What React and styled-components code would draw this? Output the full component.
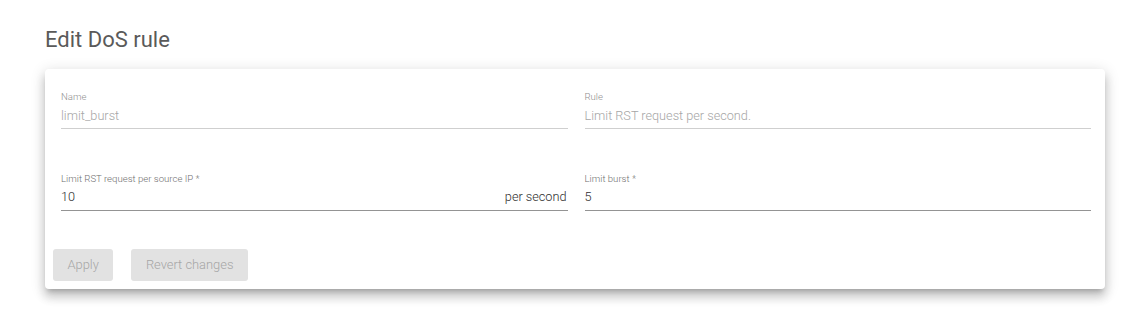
import React from "react";
import styled, { createGlobalStyle } from "styled-components";

const Global = createGlobalStyle`
  html, body { margin: 0; padding: 0; background: #ffffff; }
  body { font-family: Roboto, "Noto Sans", "Liberation Sans", sans-serif; }
  * { box-sizing: border-box; }
`;

const Page = styled.div`
  min-height: 100vh;
  padding: 26.5px 27px 39px 45px;
`;

const Title = styled.h1`
  margin: 0 0 16.5px 0;
  font-size: 22px;
  line-height: 26px;
  font-weight: 400;
  color: #5a5a5a;
`;

const Card = styled.div`
  width: 1060px;
  background: #fff;
  border-radius: 4px;
  box-shadow: 0 5px 5px -3px rgba(0, 0, 0, 0.2), 0 8px 10px 1px rgba(0, 0, 0, 0.14),
    0 3px 14px 2px rgba(0, 0, 0, 0.12);
  padding: 22px 14px 8px 16px;
`;

const Grid = styled.div`
  display: grid;
  grid-template-columns: 1fr 1fr;
  column-gap: 17px;
  row-gap: 43.5px;
`;

const Field = styled.div`
  display: flex;
  flex-direction: column;
`;

const Label = styled.label`
  font-size: 9.6px;
  font-weight: 300;
  line-height: 12px;
  color: ${(p) => (p.$disabled ? "#8f8f8f" : "#6f6f6f")};
  margin-bottom: 2.5px;
`;

const InputRow = styled.div`
  display: flex;
  align-items: center;
  border-bottom: 1px solid ${(p) => (p.$disabled ? "#cfcfcf" : "#949494")};
  padding-bottom: 2.5px;
`;

const Value = styled.span`
  flex: 1;
  font-size: 12.7px;
  font-weight: 300;
  line-height: 20px;
  color: ${(p) => (p.$disabled ? "#a6a6a6" : "#2e2e2e")};
`;

const Suffix = styled.span`
  font-size: 12.7px;
  font-weight: 300;
  line-height: 20px;
  color: #2e2e2e;
  margin-right: 1px;
`;

const Actions = styled.div`
  display: flex;
  gap: 18px;
  margin-top: 38px;
  margin-left: -8px;
`;

const Button = styled.button`
  height: 32px;
  padding: 0 14.5px;
  border: none;
  border-radius: 3px;
  background: #e2e2e2;
  color: #a6a6a6;
  font-family: Roboto, "Noto Sans", "Liberation Sans", sans-serif;
  font-size: 12.9px;
  font-weight: 300;
  cursor: default;
`;

const TextField = ({ label, value, suffix, disabled }) => (
  <Field>
    <Label $disabled={disabled}>{label}</Label>
    <InputRow $disabled={disabled}>
      <Value $disabled={disabled}>{value}</Value>
      {suffix && <Suffix>{suffix}</Suffix>}
    </InputRow>
  </Field>
);

export default function App() {
  return (
    <>
      <Global />
      <Page>
        <Title>Edit DoS rule</Title>
        <Card>
          <Grid>
            <TextField label="Name" value="limit_burst" disabled />
            <TextField label="Rule" value="Limit RST request per second." disabled />
            <TextField label="Limit RST request per source IP *" value="10" suffix="per second" />
            <TextField label="Limit burst *" value="5" />
          </Grid>
          <Actions>
            <Button disabled>Apply</Button>
            <Button disabled>Revert changes</Button>
          </Actions>
        </Card>
      </Page>
    </>
  );
}
